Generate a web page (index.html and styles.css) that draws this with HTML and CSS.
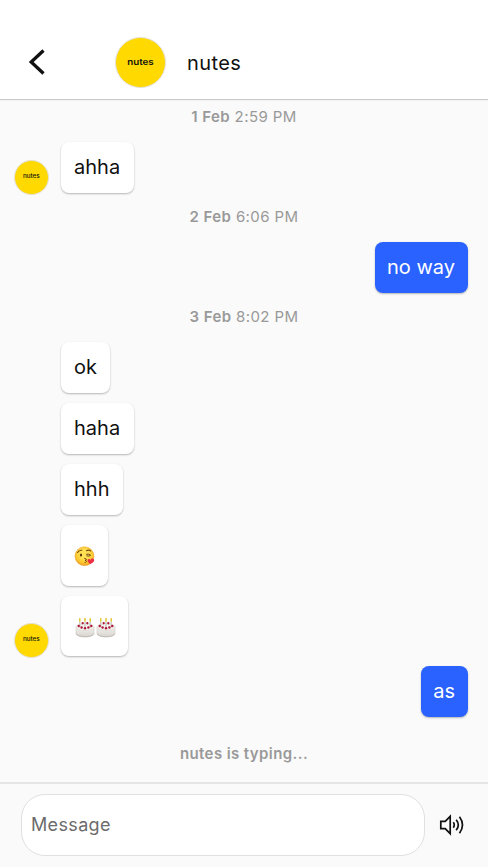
FILE: index.html
```html
<!DOCTYPE html>
<html lang="en">
<head>
<meta charset="utf-8">
<title>nutes</title>
<link rel="stylesheet" href="styles.css">
</head>
<body>
<svg width="0" height="0" class="defs" aria-hidden="true">
  <defs>
    <radialGradient id="face" cx=".5" cy=".4" r=".62"><stop offset=".35" stop-color="#ffe052"/><stop offset=".75" stop-color="#fbc52b"/><stop offset="1" stop-color="#e8942c"/></radialGradient>
    <linearGradient id="cream" x1="0" y1="0" x2="0" y2="1"><stop offset="0" stop-color="#f2f0ec"/><stop offset="1" stop-color="#d8d5cf"/></linearGradient>
    <symbol id="cake" viewBox="0 0 20 21">
      <path d="M1 10v6.500c0 2 4 3.500 9 3.500s9-1.500 9-3.500V10z" fill="url(#cream)" stroke="#c4c1bb" stroke-width=".5"/>
      <ellipse cx="10" cy="10" rx="9" ry="3.500" fill="#f5f3ef" stroke="#d2cec8" stroke-width=".5"/>
      <path d="M1.200 16.800c1.800 3.800 15.800 3.800 17.600 0" fill="none" stroke="#bcb8b1" stroke-width=".8"/>
      <path d="M4.800 4.500v6M10 4.500v7M15.200 4.500v6M7.500 5v3M12.500 5v3" stroke="#c9c4bd" stroke-width="1.300"/>
      <g fill="#b0183a"><circle cx="3.700" cy="9" r="1.200"/><circle cx="6.600" cy="10.500" r="1.200"/><circle cx="10" cy="11.200" r="1.200"/><circle cx="13.400" cy="10.500" r="1.200"/><circle cx="16.300" cy="9" r="1.200"/><circle cx="7.700" cy="6.200" r="1.100"/><circle cx="12.300" cy="6.200" r="1.100"/></g>
      <path d="M4.800 1.800v2.200M10 1.500v2.500M15.200 1.800v2.200" stroke="#e2c52c" stroke-width="1.500" stroke-linecap="round"/>
    </symbol>
  </defs>
</svg>
<div class="app">
  <header class="header">
    <svg class="back" width="20" height="28" viewBox="0 0 20 28"><path d="M18.500 2.500 6.200 14l12.300 11.500" fill="none" stroke="#111" stroke-width="3.300"/></svg>
    <div class="avatar avatar-large"><span>nutes</span></div>
    <h1 class="name">nutes</h1>
  </header>
  <main class="chat">
    <div class="date"><b>1 Feb</b> 2:59 PM</div>
    <div class="row"><div class="avatar"><span>nutes</span></div><div class="bubble">ahha</div></div>
    <div class="date"><b>2 Feb</b> 6:06 PM</div>
    <div class="row mine"><div class="bubble">no way</div></div>
    <div class="date"><b>3 Feb</b> 8:02 PM</div>
    <div class="row"><div class="bubble">ok</div></div>
    <div class="row"><div class="bubble">haha</div></div>
    <div class="row"><div class="bubble">hhh</div></div>
    <div class="row"><div class="bubble emoji">
      <svg width="22" height="21" viewBox="0 0 22 21" role="img" aria-label="Kissing face">
        <circle cx="10.500" cy="10.200" r="9.500" fill="url(#face)" stroke="#e6a12c" stroke-width=".5"/>
        <path d="M3.500 6.500Q5 4 7.800 4.200M12.500 4.700q2.200-1.200 4.200.3" fill="none" stroke="#7b4c16" stroke-width="1.100" stroke-linecap="round"/>
        <ellipse cx="7" cy="9" rx="1.100" ry="1.600" fill="#56340f"/>
        <path d="M12.200 8.300q2-.8 4.300.7M12.500 9.800q2 .7 4-.3" fill="none" stroke="#6a4012" stroke-width="1"/>
        <path d="M10.300 12.400c3 .2 2.500 1.900.7 1.900 2 .1 2 2-.3 2.200" fill="none" stroke="#70400f" stroke-width="1"/>
        <path d="M16.300 18.300c-1.300-1.500-3-2.300-2.700-4 .3-1.500 2-1.700 2.800-.4.700-1.900 3.300-1.900 3.700 0 .5 2-1.900 2.800-3.800 4.400z" fill="#ed2e46"/>
      </svg>
    </div></div>
    <div class="row"><div class="avatar"><span>nutes</span></div><div class="bubble emoji cakes">
      <svg width="20" height="21" role="img" aria-label="Cake"><use href="#cake"/></svg>
      <svg width="20" height="21" role="img" aria-label="Cake"><use href="#cake"/></svg>
    </div></div>
    <div class="row mine"><div class="bubble">as</div></div>
    <div class="typing">nutes is typing...</div>
  </main>
  <footer class="composer">
    <input class="field" type="text" placeholder="Message" aria-label="Message">
    <svg class="sound" width="26" height="22" viewBox="0 0 26 22" fill="none" stroke="#111" stroke-width="1.700"><path d="M1.800 7.300h4.400l5-5v17.400l-5-5H1.800z"/><path d="M14.300 8.300q1.900 2.700 0 5.400M17.200 5.700q4.200 5.300 0 10.600M20.500 2.800q6 8.200 0 16.400"/></svg>
  </footer>
</div>
</body>
</html>
```

FILE: styles.css
```css
* { box-sizing: border-box; }
body {
  margin: 0;
  background: #fafafa;
  color: #111;
  font-family: Inter, "Liberation Sans", sans-serif;
}
.defs { position: absolute; }
.app { display: flex; flex-direction: column; height: 867px; overflow: hidden; }
.header {
  display: flex;
  align-items: center;
  flex: none;
  height: 99px;
  padding: 26px 25px 0;
  background: #fff;
  box-shadow: 0 1px 1px #cacaca;
}
.back { margin-top: -1px; }
.avatar {
  display: flex;
  align-items: center;
  justify-content: center;
  flex: none;
  width: 35px;
  height: 35px;
  margin: 0 12.500px -1.500px 13.500px;
  border: 1px solid #e4e0d4;
  border-radius: 50%;
  background: #ffd900;
  font: 500 5.500px/1 Inter, sans-serif;
}
.avatar span { transform: scaleX(1.150); }
.avatar-large { width: 51px; height: 51px; margin: 0 21px 0 70px; font-size: 8.500px; font-weight: 600; }
.name { margin: 0; font-size: 20px; font-weight: 400; letter-spacing: .4px; }
.chat { flex: 1; padding: 1px 20px 0 0; }
.date, .typing {
  height: 33px;
  margin-right: -20px;
  color: #999;
  font-size: 15px;
  line-height: 33px;
  text-align: center;
  letter-spacing: .4px;
}
.date b { font-weight: 600; }
.row { display: flex; align-items: flex-end; margin: 9px 0 10px; }
.row + .row { margin-top: 0; }
.row + .date { margin-top: -3px; }
.bubble {
  height: 51px;
  padding: 0 13.500px 0 13px;
  border-radius: 8px;
  background: #fff;
  box-shadow: 0 1px 2px rgba(0, 0, 0, .28);
  font-size: 20px;
  line-height: 51px;
}
.bubble:first-child { margin-left: 61px; }
.mine { justify-content: flex-end; }
.mine .bubble { padding-right: 13px; background: #2962ff; color: #fff; }
.mine .bubble { margin-left: 0; padding-left: 12.500px; }
.emoji { display: flex; align-items: center; height: 60.500px; padding: 3px 12px 0 13px; }
.cakes { gap: 1px; padding-left: 14px; }
.typing { margin-top: 20px; font-weight: 600; letter-spacing: .4px; }
.composer {
  display: flex;
  align-items: center;
  gap: 14px;
  flex: none;
  height: 85px;
  padding: 0 23px 2px 21px;
  border-top: 2px solid #e5e5e5;
}
.field {
  flex: 1;
  min-width: 0;
  height: 62px;
  padding: 0 9px;
  border: 1.500px solid #e0e0e0;
  border-radius: 24px;
  background: #fff;
  font: 18px Inter, sans-serif;
  letter-spacing: .35px;
}
.field::placeholder { color: #6b6b6b; opacity: 1; }
.sound { flex: none; }
```
